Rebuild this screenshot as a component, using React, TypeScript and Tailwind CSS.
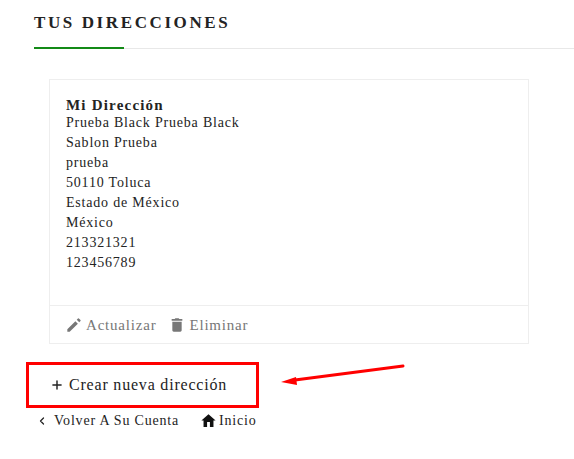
import { ChevronLeft, Plus } from "lucide-react";

const lines = [
  "Prueba Black Prueba Black",
  "Sablon Prueba",
  "prueba",
  "50110 Toluca",
  "Estado de México",
  "México",
  "213321321",
  "123456789",
];

const Pencil = () => (
  <svg viewBox="0 0 24 24" className="w-[16px] h-[16px] fill-[#777777]">
    <path d="M2 18.5V22h3.5L17.81 9.94l-3.75-3.75L2 18.5zM21.71 6.04a1 1 0 0 0 0-1.41l-2.34-2.34a1 1 0 0 0-1.41 0l-1.83 1.83 3.75 3.75 1.83-1.83z" />
  </svg>
);

const Trash = () => (
  <svg viewBox="0 0 24 24" className="w-[16px] h-[16px] fill-[#777777]">
    <path d="M5 20c0 1.1.9 2 2 2h10c1.1 0 2-.9 2-2V7H5v13zM20 3h-4.5l-1-1h-5l-1 1H4v2.5h16V3z" />
  </svg>
);

const Home = () => (
  <svg viewBox="0 0 24 24" className="w-[17px] h-[17px] fill-[#111111] -mt-px">
    <path d="M10 21v-7h4v7h5v-9h3L12 3 2 12h3v9z" />
  </svg>
);

export default function App() {
  return (
    <div className="relative w-[574px] h-[459px] overflow-hidden bg-white font-['Liberation_Serif',serif] text-[14px] leading-[20px] tracking-[0.8px] text-[#232323]">
      <h1 className="pl-[34px] pt-[13px] h-[47px] text-[17px] leading-[20px] font-bold tracking-[2.6px] text-[#232323]">
        TUS DIRECCIONES
      </h1>
      <div className="flex h-[2px] items-end">
        <div className="ml-[34px] w-[90px] h-[2px] bg-[#138a17]" />
        <div className="flex-1 h-px bg-[#e8e8e8]" />
      </div>

      <section className="ml-[49px] mt-[30px] w-[480px] h-[265px] border border-[#eeeeee] flex flex-col">
        <div className="flex-1 pl-4 pt-[17px]">
          <h2 className="font-bold leading-[16px] text-[15px] tracking-[1.2px]">Mi Dirección</h2>
          {lines.map((line) => (
            <p key={line}>{line}</p>
          ))}
        </div>
        <div className="h-[38px] border-t border-[#eeeeee] flex items-center pl-4 text-[15px] tracking-[0.8px] text-[#777777]">
          <Pencil />
          <span className="ml-[4px]">Actualizar</span>
          <span className="ml-[13px] flex items-center">
            <Trash />
            <span className="ml-[4px]">Eliminar</span>
          </span>
        </div>
      </section>

      <button className="ml-[26px] mt-[18px] w-[233px] h-[46px] border-[3px] border-[#ff0000] flex items-center pl-[21px] text-[16px] tracking-[0.8px] text-[#232323]">
        <Plus size={14} strokeWidth={2.5} />
        <span className="ml-[5px]">Crear nueva dirección</span>
      </button>

      <div className="flex items-center ml-[36px] mt-[3px] h-[20px]">
        <ChevronLeft size={12} strokeWidth={2.5} />
        <span className="ml-[6px]">Volver A Su Cuenta</span>
        <span className="ml-[21px] flex items-center">
          <Home />
          <span className="ml-[2px]">Inicio</span>
        </span>
      </div>

      <svg className="absolute left-[275px] top-[360px]" width="135" height="30" viewBox="0 0 135 30">
        <path d="M128 6 L20 20" stroke="#ff0000" strokeWidth="3" strokeLinecap="round" fill="none" />
        <path d="M6 22 L21 17 L22 25 Z" fill="#ff0000" />
      </svg>
    </div>
  );
}
